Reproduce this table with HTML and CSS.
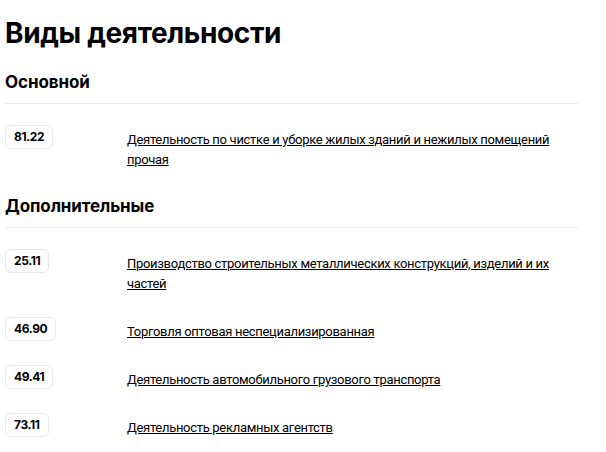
FILE: index.html
```html
<!DOCTYPE html>
<html lang="ru">
<head>
<meta charset="utf-8">
<title>Виды деятельности</title>
<link rel="stylesheet" href="styles.css">
</head>
<body>
<main class="page">
  <h1 class="title">Виды деятельности</h1>

  <section class="group">
    <h2 class="group-title">Основной</h2>
    <ul class="rows">
      <li class="row">
        <span class="code">81.22</span>
        <a class="name" href="#">Деятельность по чистке и уборке жилых зданий и нежилых помещений прочая</a>
      </li>
    </ul>
  </section>

  <section class="group">
    <h2 class="group-title">Дополнительные</h2>
    <ul class="rows">
      <li class="row">
        <span class="code">25.11</span>
        <a class="name" href="#">Производство строительных металлических конструкций, изделий и их частей</a>
      </li>
      <li class="row">
        <span class="code">46.90</span>
        <a class="name" href="#">Торговля оптовая неспециализированная</a>
      </li>
      <li class="row">
        <span class="code">49.41</span>
        <a class="name" href="#">Деятельность автомобильного грузового транспорта</a>
      </li>
      <li class="row">
        <span class="code">73.11</span>
        <a class="name" href="#">Деятельность рекламных агентств</a>
      </li>
    </ul>
  </section>
</main>
</body>
</html>
```

FILE: styles.css
```css
* { box-sizing: border-box; }

html, body {
  margin: 0;
  padding: 0;
  background: #fff;
  color: #000;
}

.page {
  padding: 15px 28px 0 5px;
  font-family: Inter, "Noto Sans", sans-serif;
}

.title {
  margin: 0;
  font-size: 28px;
  line-height: 36px;
  font-weight: 700;
  letter-spacing: -0.35px;
}

.group { margin-top: 19px; }
.group + .group { margin-top: 24px; }

.group-title {
  margin: 0;
  font-size: 17px;
  line-height: 24px;
  font-weight: 700;
  letter-spacing: -0.1px;
  padding-bottom: 9px;
  border-bottom: 1px solid #ebebeb;
}

.rows {
  list-style: none;
  margin: 0;
  padding: 21px 0 0;
  display: flex;
  flex-direction: column;
  gap: 23px;
}

.row {
  display: grid;
  grid-template-columns: 122px 1fr;
  align-items: start;
}

.code {
  justify-self: start;
  height: 24px;
  padding: 0 8px;
  border: 1px solid #e8e8e8;
  border-radius: 6px;
  font-size: 12px;
  line-height: 22px;
  font-weight: 700;
  letter-spacing: -0.4px;
}

.name {
  padding-top: 5px;
  font-family: Roboto, "Liberation Sans", sans-serif;
  font-size: 13px;
  letter-spacing: -0.3px;
  line-height: 20px;
  color: #000;
  text-decoration: underline;
  text-underline-offset: 1px;
  padding-right: 20px;
}
```
